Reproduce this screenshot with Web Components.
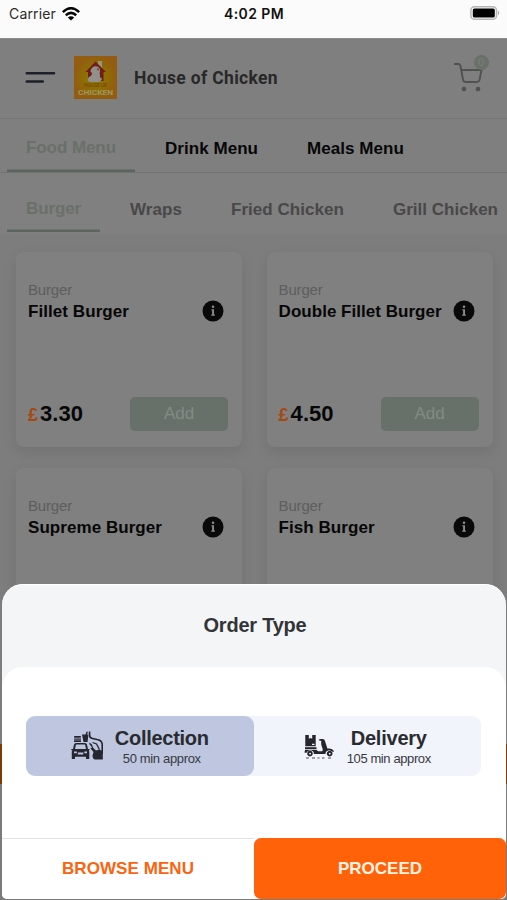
<!DOCTYPE html>
<html lang="en">
<head>
<meta charset="utf-8">
<title>House of Chicken</title>
<style>
html,body{margin:0;width:507px;height:900px;overflow:hidden;background:#7f7f7f;font-family:"Liberation Sans",Arial,sans-serif}
</style>
</head>
<body>
<order-app></order-app>
<script>
const define = (name, html, setup) => customElements.define(name, class extends HTMLElement {
  connectedCallback() {
    if (this.shadowRoot) return;
    const root = this.attachShadow({mode: 'open'});
    root.innerHTML = typeof html === 'function' ? html(this) : html;
    if (setup) setup(this, root);
  }
});

// One line of text, tracked so that it fills the width given in "w".
define('fit-text', '<style>:host{display:inline-block;white-space:nowrap;line-height:1.2}span{display:inline-block}</style><span><slot></slot></span>', (el, root) => {
  const span = root.querySelector('span');
  const w = +el.getAttribute('w');
  const n = el.textContent.length;
  span.style.letterSpacing = ((w - span.getBoundingClientRect().width) / n) + 'px';
  el.style.width = w + 'px';
});

define('status-bar', `<style>
:host{display:grid;grid-template-columns:1fr auto 1fr;align-items:center;height:38px;box-sizing:border-box;padding:0 6px 10px 9px;background:#fbfbfb;color:#111;font:14px Inter,sans-serif}
.l{display:flex;align-items:center;gap:6px}.l fit-text{color:#2a2a2a}.c{font-weight:600;color:#111;margin-left:-2px}.r{justify-self:end;display:block;margin-top:-2px}
</style>
<div class="l"><fit-text w="47">Carrier</fit-text><svg width="18" height="14" viewBox="0 0 18 14" fill="none" stroke="#050505" stroke-width="2.5"><path d="M.8 5.2Q9-2.6 17.2 5.2M3.8 8.2Q9 3.6 14.2 8.2"/><path d="M9 13.6 5.8 10.5Q9 7.9 12.2 10.5Z" fill="#050505" stroke="none"/></svg></div>
<fit-text class="c" w="60">4:02 PM</fit-text>
<svg class="r" width="31" height="14" viewBox="0 0 31 14"><rect x=".9" y=".7" width="25.6" height="12.6" rx="3.6" fill="#fbfbfb" stroke="#b5b5b5" stroke-width="1.5"/><rect x="2.8" y="2.5" width="22" height="9" rx="1.6" fill="#000"/><path d="M28 4.6q2.6 2.4 0 4.8z" fill="#aaa"/></svg>`);

define('shop-logo', `<style>:host{display:block;width:43px;height:43px}svg{display:block}</style>
<svg width="43" height="43" viewBox="0 0 43 43"><defs><radialGradient id="g"><stop offset="0" stop-color="#8e7b00"/><stop offset=".6" stop-color="#8f6b06"/><stop offset="1" stop-color="#935c10"/></radialGradient></defs>
<rect width="43" height="43" fill="url(#g)"/>
<path d="M24 5h4v8h-4z" fill="#999676"/>
<path d="M11.5 16 21.500 5.500 32 16H29.500V25H14V16Z" fill="#731c17"/>
<path d="M18 12c2-3 8-2 8 2 0 3-1 4 1 7 2 2 0 5-3 5h-7c-4 0-4-3-2-5 2-1 3-2 3-4-2-1-2-3 0-5z" fill="#92908b"/>
<path d="m23 12 2 1-1 2zM26 18l2 3-2 1z" fill="#731c17"/>
<text x="21.5" y="31" text-anchor="middle" font-family="Roboto,sans-serif" font-size="5" textLength="23" fill="#6d390b">HOUSE OF</text>
<text x="21.5" y="39" text-anchor="middle" font-family="Roboto,sans-serif" font-size="8" font-weight="bold" textLength="35" lengthAdjust="spacingAndGlyphs" fill="#9c985e">CHICKEN</text></svg>`);

define('app-header', `<style>
:host{display:flex;align-items:center;height:81px;box-sizing:border-box;padding:0 15px 3px 25px;border-top:1px solid #8c8c8c;border-bottom:1px solid #767676;background:#7f7f7f}
shop-logo{margin-left:18px}.t{margin:2px 0 0 17px;font:700 17.500px Roboto,sans-serif;color:#282828}
.cart{margin-left:auto;position:relative;width:38px;height:40px}
.cart b{position:absolute;left:19.500px;top:-2px;width:15px;height:15px;border-radius:50%;background:#69716a;color:#7a817b;font:10px/15px "Liberation Sans",sans-serif;text-align:center}
svg{display:block}
</style>
<svg width="31" height="14" viewBox="0 0 31 14" stroke="#1d2029" stroke-width="2.600" stroke-linecap="round"><path d="M1.800 3.200H29M1.800 11.500H17.800"/></svg>
<shop-logo></shop-logo><fit-text class="t" w="144">House of Chicken</fit-text>
<div class="cart"><svg width="38" height="40" viewBox="0 0 38 40" fill="none" stroke="#515151" stroke-width="1.900" stroke-linecap="round" stroke-linejoin="round"><path d="M.8 7H4.500Q6 7 6.500 9L9 22.500Q9.500 25 11.500 25H23Q25 25 25.500 23L27.500 13H8"/><g fill="#515151"><circle cx="10" cy="32" r="1.400"/><circle cx="24" cy="32" r="1.400"/></g></svg><b>0</b></div>`);

define('menu-tab', `<style>
:host{display:flex;box-sizing:border-box;padding:var(--tab-drop,7px) 19px 0;height:100%;align-items:center;font-weight:700;font-size:17px;color:var(--tab-color,#070707)}
:host([active]){color:#697069;box-shadow:inset 0 -2.500px #5c645e}
:host([active]) slot{display:block;margin-top:-2px}
</style><slot></slot>`);

define('menu-tabs', `<style>
:host{display:flex;align-items:flex-start;gap:11px;box-sizing:border-box;height:54px;padding:0 0 0 7px;border-bottom:1px solid #737373;background:#7f7f7f;overflow:hidden}
:host([sub]){height:62px;padding-bottom:3px;border-bottom:0;--tab-color:#484848;--tab-drop:15px;background:#808080}
</style><slot></slot>`);

define('menu-card', el => `<style>
:host{display:flex;flex-direction:column;box-sizing:border-box;width:226px;height:195px;padding:29px 14px 16px 12px;background:#808080;border-radius:8px;box-shadow:0 5px 14px rgba(0,0,0,.09)}
.k{font-size:15px;color:#5d5d5d;line-height:18px}
.n{display:flex;justify-content:space-between;align-items:center;font-weight:700;font-size:17px;color:#070707;height:26px;padding-right:4px;margin-top:-1px}
.n fit-text{margin-top:3px}
.b{display:flex;align-items:center;margin-top:auto;height:34px}
.c{font-weight:700;font-size:18px;color:#a7480f;margin:2px 2px 0 0}.p{font-weight:700;font-size:22px;color:#070707;margin-top:1px}
button{margin:0 0 0 auto;width:98px;height:34px;border:0;padding:1px 0 0;border-radius:5px;background:#677169;color:#838b84;font:17px "Liberation Sans",sans-serif}
svg{display:block}
</style>
<div class="k"><fit-text w="44">Burger</fit-text></div>
<div class="n"><fit-text w="${el.getAttribute('w')}">${el.getAttribute('name')}</fit-text><svg width="22" height="22" viewBox="0 0 22 22"><circle cx="11" cy="11" r="10.500" fill="#090909"/><g fill="#8a8a8a"><circle cx="11" cy="6.700" r="1.300"/><path d="M9.400 9.200H12V14.600H12.900V15.800H9.200V14.600H10.100V10.400H9.400Z"/></g></svg></div>
${el.hasAttribute('price') ? `<div class="b"><span class="c">£</span><fit-text class="p" w="43">${el.getAttribute('price')}</fit-text><button><fit-text w="30">Add</fit-text></button></div>` : ''}`);

define('card-grid', `<style>:host{display:grid;grid-template-columns:226px 226px;gap:21px 24.600px;padding:17px 14px 0 16px;align-content:start;background:#7d7d7d;height:509px;box-sizing:border-box;overflow:hidden}</style><slot></slot>`);

define('basket-bar', `<style>:host{display:block;height:40px;background:#823708}</style>`);

define('collect-icon', `<style>:host{display:block}svg{display:block}</style><svg width="32" height="30" viewBox="0 0 32 30" fill="#25262f">
<rect x="3" y="5" width="7" height="1.800" rx=".8"/><rect x="3" y="7.500" width="7" height="1.200"/><rect x="3" y="9.300" width="7" height="1.800" rx=".6"/><path d="M11 3.500h6.500l-1 7.500h-4zM14.500 3.500 15.500.8H17L16 3.500z"/>
<path fill-rule="evenodd" d="M3 13.500Q3.500 12 5 12H14Q15.500 12 16 13.500L17 18H18.500V19.200H17.700Q18.300 20 18.300 21V28H15V25.800H4V28H.8V21Q.8 20 1.500 19.200H.3V18H2ZM5 13.500 4 18H15L14 13.500ZM3 20.500V22.300H5.800V20.500ZM13.300 20.500V22.300H16V20.500ZM6.800 21.500V23.500H12.300V21.500Z"/>
<path d="M18.600.5V4Q18.500 7 21.500 7.500L26 8.500Q30.500 9 31.200 13V23" fill="none" stroke="#25262f" stroke-width="1.600"/>
<path d="M18.500 11.500 21 13.500 22 16.500 25 19.500 28 18.500 31.800 20V28.500H23.500Q21.300 27.500 21.500 24.500L22.500 21 19.500 17.500 21 16.500 18.300 13Z"/><path d="M21.500 11.500 25.500 13 28.500 18.500" fill="none" stroke="#25262f" stroke-width="1.300"/></svg>`);

define('delivery-icon', `<style>:host{display:block}svg{display:block}</style><svg width="31" height="27" viewBox="0 0 31 27" fill="#25262d">
<path fill-rule="evenodd" d="M1.300 2H11.700V13.300H1.300ZM4.800 2V5.800L6.500 5 8.200 5.800V2ZM8 10.800V11.900H10.500V10.800Z"/><rect x="1" y="14.200" width="11.500" height="1.800"/>
<path d="M1 16.700H12.500L14 18.300H18.300L18.800 16.500 17.200 11.500V7.800H15.300V6H18.800Q20.500 6.200 21 8L23.400 15.500Q28.500 14.800 30.200 18.800H28.500Q25 15.800 22 18.800L21.300 21H10Q9.500 17.300 6 17.300 3.500 17.300 2.500 19.800H.5Z"/>
<path fill-rule="evenodd" d="M6 17.800A2.800 2.800 0 1 1 5.900 17.800ZM6 19.700A.9 .9 0 1 0 6.100 19.700ZM25.700 17.700A2.900 2.900 0 1 1 25.600 17.700ZM25.700 19.700A.9 .9 0 1 0 25.800 19.700Z"/>
<path d="M2 25H5M8 25H11M13.500 25H15.500M18 25H20.500M24 25H27" stroke="#4a4b52" stroke-width="1"/></svg>`);

define('type-option', `<style>
:host{display:flex;flex:1;align-items:center;justify-content:center;gap:12px;border-radius:9px;color:#292b31}
:host([selected]){background:#bec7df}
.t{display:flex;flex-direction:column;align-items:center;gap:1px;padding-top:1px}.h{font-weight:700;font-size:20px}.s{font-size:13px;line-height:15px;color:#37393f}
</style><slot name="icon"></slot><div class="t"><div class="h"><slot></slot></div><div class="s"><slot name="wait"></slot></div></div>`);

define('order-sheet', `<style>
:host{display:flex;flex-direction:column;position:absolute;left:2px;top:584px;width:504px;height:315px;box-sizing:border-box;border-radius:21px 21px 5px 5px;background:#f3f5f7;overflow:hidden;box-shadow:inset 0 1px #fff}
header{height:83px;display:flex;align-items:center;justify-content:center;font-weight:700;font-size:20px;color:#333438;padding:0 0 2px 2px;box-sizing:border-box}
main{flex:1;display:flex;background:#fff;border-radius:21px 21px 0 0;padding:49px 25px 0 24px;align-items:flex-start}
.seg{display:flex;flex:1;height:60px;background:#f2f4fb;border-radius:9px}
footer{display:flex;height:61px;background:#fff;font-weight:700;font-size:17px}
footer div{flex:1;display:flex;align-items:center;justify-content:center;border-top:1px solid #e3e3e3;color:#fa6410}
footer div+div{background:#ff6208;color:#fff3e4;border-color:#ff6208;border-radius:7px}
</style>
<header><fit-text w="103">Order Type</fit-text></header>
<main><div class="seg">
<type-option selected><collect-icon slot="icon"></collect-icon><fit-text w="94">Collection</fit-text><fit-text slot="wait" w="78">50 min approx</fit-text></type-option>
<type-option><delivery-icon slot="icon"></delivery-icon><fit-text w="76">Delivery</fit-text><fit-text slot="wait" w="84">105 min approx</fit-text></type-option>
</div></main>
<footer><div><fit-text w="132">BROWSE MENU</fit-text></div><div><fit-text w="84">PROCEED</fit-text></div></footer>`);

define('order-app', `<style>:host{display:block;position:relative;width:507px;height:900px;overflow:hidden;background:#7b7b7b}</style>
<status-bar></status-bar><app-header></app-header>
<menu-tabs><menu-tab active><fit-text w="90">Food Menu</fit-text></menu-tab><menu-tab><fit-text w="93">Drink Menu</fit-text></menu-tab><menu-tab><fit-text w="97">Meals Menu</fit-text></menu-tab></menu-tabs>
<menu-tabs sub><menu-tab active><fit-text w="55">Burger</fit-text></menu-tab><menu-tab><fit-text w="52">Wraps</fit-text></menu-tab><menu-tab><fit-text w="113">Fried Chicken</fit-text></menu-tab><menu-tab><fit-text w="105">Grill Chicken</fit-text></menu-tab></menu-tabs>
<card-grid>
<menu-card name="Fillet Burger" w="101" price="3.30"></menu-card><menu-card name="Double Fillet Burger" w="163" price="4.50"></menu-card>
<menu-card name="Supreme Burger" w="134"></menu-card><menu-card name="Fish Burger" w="96"></menu-card>
</card-grid><basket-bar></basket-bar><order-sheet></order-sheet>`);
</script>
</body>
</html>
